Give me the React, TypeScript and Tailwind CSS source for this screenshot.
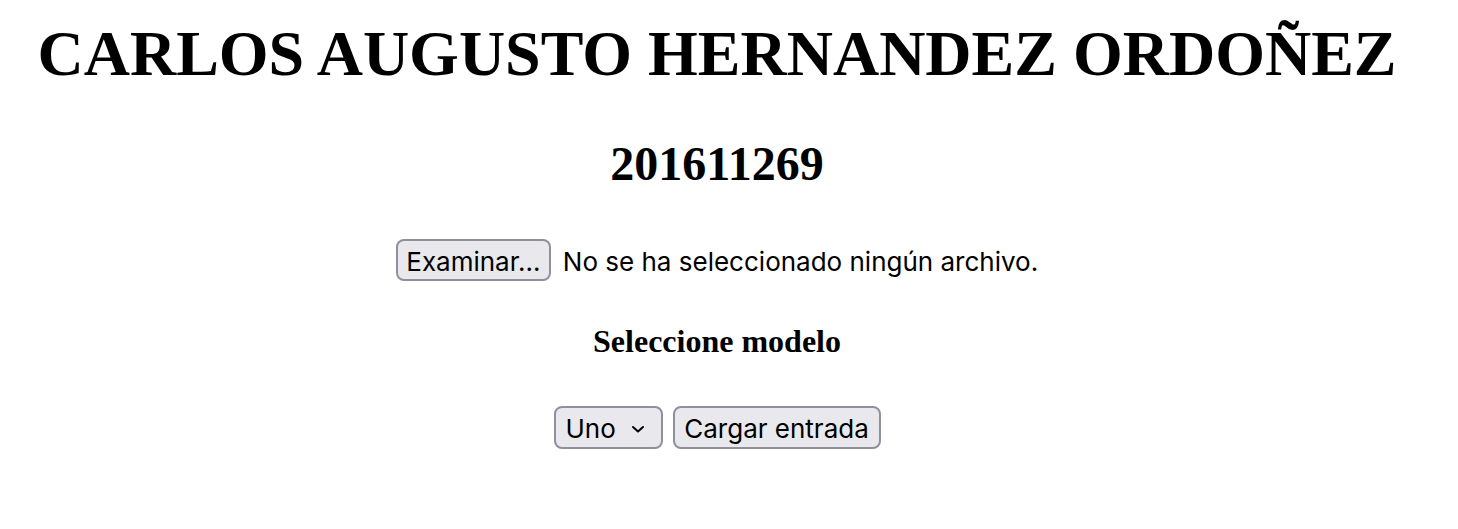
import React from "react";

export default function App() {
  return (
    <div className="w-[1458px] h-[529px] bg-white text-black pl-[16px] pr-[40px] flex flex-col items-center text-center">
      <h1 className="mt-[17px] font-['Liberation_Serif','Times_New_Roman',serif] text-[64px] leading-[74px] font-bold whitespace-nowrap">
        CARLOS AUGUSTO HERNANDEZ ORDOÑEZ
      </h1>
      <h2 className="mt-[45px] font-['Liberation_Serif','Times_New_Roman',serif] text-[48px] leading-[56px] font-bold">
        201611269
      </h2>
      <div className="mt-[47px] flex items-center gap-[12px] font-['Inter','Noto_Sans',sans-serif] text-[26px] leading-[32px]">
        <button className="h-[42px] w-[155px] pt-[3px] rounded-[8px] border-2 border-[#8f8f9d] bg-[#e9e9ed] flex items-center justify-center">
          Examinar…
        </button>
        <span className="pt-[3px]">No se ha seleccionado ningún archivo.</span>
      </div>
      <h3 className="mt-[42px] font-['Liberation_Serif','Times_New_Roman',serif] text-[32px] leading-[37px] font-bold">
        Seleccione modelo
      </h3>
      <div className="mt-[46px] flex items-center gap-[10px] font-['Inter','Noto_Sans',sans-serif] text-[26px] leading-[32px]">
        <div className="h-[43px] w-[109px] pt-[3px] rounded-[8px] border-2 border-[#8f8f9d] bg-[#e9e9ed] flex items-center justify-between pl-[10px] pr-[16px]">
          <span>Uno</span>
          <svg width="14" height="10" viewBox="0 0 14 10" fill="none">
            <path d="M2 3 L7 7.5 L12 3" stroke="#000" strokeWidth="2" strokeLinecap="round" strokeLinejoin="round" />
          </svg>
        </div>
        <button className="h-[43px] w-[208px] pt-[3px] rounded-[8px] border-2 border-[#8f8f9d] bg-[#e9e9ed] flex items-center justify-center">
          Cargar entrada
        </button>
      </div>
    </div>
  );
}
